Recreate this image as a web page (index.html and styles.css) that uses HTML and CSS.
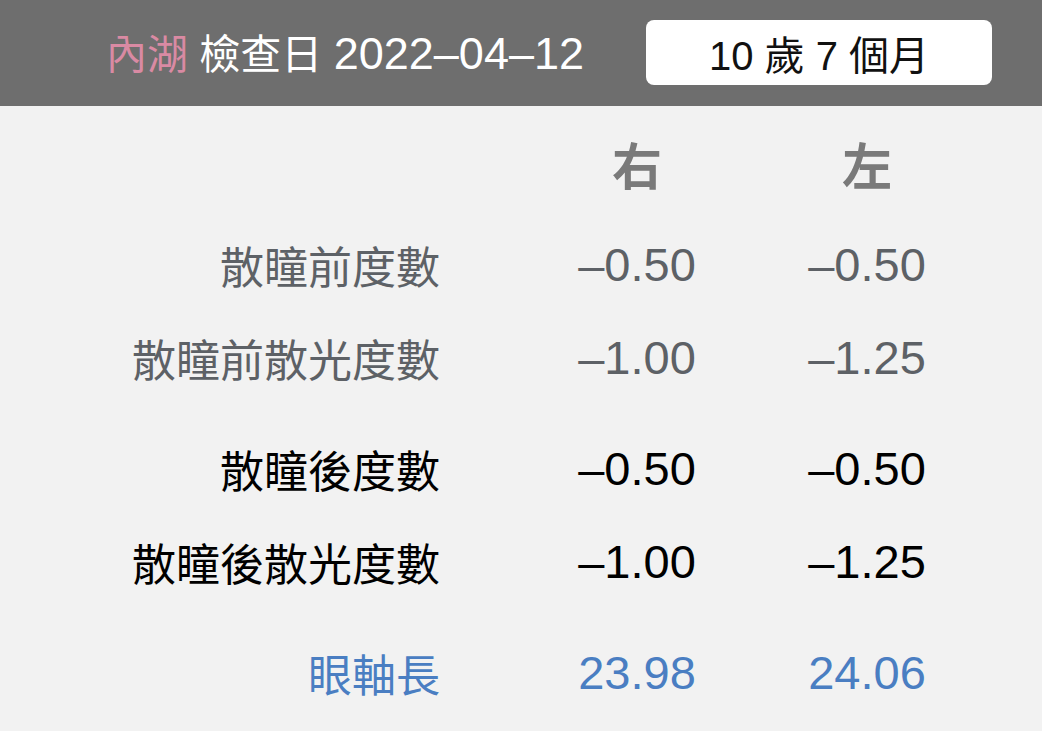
FILE: index.html
```html
<!DOCTYPE html>
<html lang="zh-Hant">
<head>
<meta charset="utf-8">
<link rel="stylesheet" href="styles.css">
</head>
<body>
<header class="topbar">
  <div class="visit"><span class="place">內湖</span> 檢查日 <span class="date">2022–04–12</span></div>
  <div class="age">10 歲 7 個月</div>
</header>
<main class="table">
  <div class="row head">
    <div class="label"></div>
    <div class="val">右</div>
    <div class="val">左</div>
  </div>
  <div class="group pre">
    <div class="row">
      <div class="label">散瞳前度數</div>
      <div class="val">–0.50</div>
      <div class="val">–0.50</div>
    </div>
    <div class="row">
      <div class="label">散瞳前散光度數</div>
      <div class="val">–1.00</div>
      <div class="val">–1.25</div>
    </div>
  </div>
  <div class="group post">
    <div class="row">
      <div class="label">散瞳後度數</div>
      <div class="val">–0.50</div>
      <div class="val">–0.50</div>
    </div>
    <div class="row">
      <div class="label">散瞳後散光度數</div>
      <div class="val">–1.00</div>
      <div class="val">–1.25</div>
    </div>
  </div>
  <div class="group axial">
    <div class="row">
      <div class="label">眼軸長</div>
      <div class="val">23.98</div>
      <div class="val">24.06</div>
    </div>
  </div>
</main>
</body>
</html>
```

FILE: styles.css
```css
html, body {
  margin: 0;
  padding: 0;
  background: #f2f2f2;
}
body {
  width: 1042px;
  height: 731px;
  overflow: hidden;
  font-family: "Liberation Sans", "Noto Sans CJK TC", sans-serif;
}
.topbar {
  height: 106px;
  background: #6e6e6e;
  display: flex;
  align-items: center;
  justify-content: flex-end;
  padding-right: 50px;
  gap: 62px;
  box-sizing: border-box;
}
.visit {
  color: #ffffff;
  font-size: 41px;
  line-height: 1;
  white-space: nowrap;
}
.date {
  font-size: 45px;
}
.place {
  color: #d98aa3;
}
.age {
  width: 346px;
  height: 65px;
  background: #ffffff;
  border-radius: 8px;
  display: flex;
  align-items: center;
  justify-content: center;
  font-size: 40px;
  color: #111111;
  margin-top: -1px;
}
.table {
  padding-top: 10px;
}
.row {
  display: grid;
  grid-template-columns: 522px 230px 230px;
  height: 93px;
  align-items: center;
}
.label {
  text-align: right;
  padding-right: 82px;
  font-family: "Noto Sans CJK TC", sans-serif;
  font-size: 44px;
  white-space: nowrap;
}
.val {
  text-align: center;
  font-size: 47px;
}
.head .val {
  font-family: "Noto Sans CJK TC", sans-serif;
  font-weight: 700;
  font-size: 50px;
  color: #7a7a7a;
}
.pre {
  margin-top: 9px;
  color: #5d6166;
}
.post {
  margin-top: 18px;
  color: #000000;
}
.axial {
  margin-top: 18px;
  color: #4a7ec2;
}
```
